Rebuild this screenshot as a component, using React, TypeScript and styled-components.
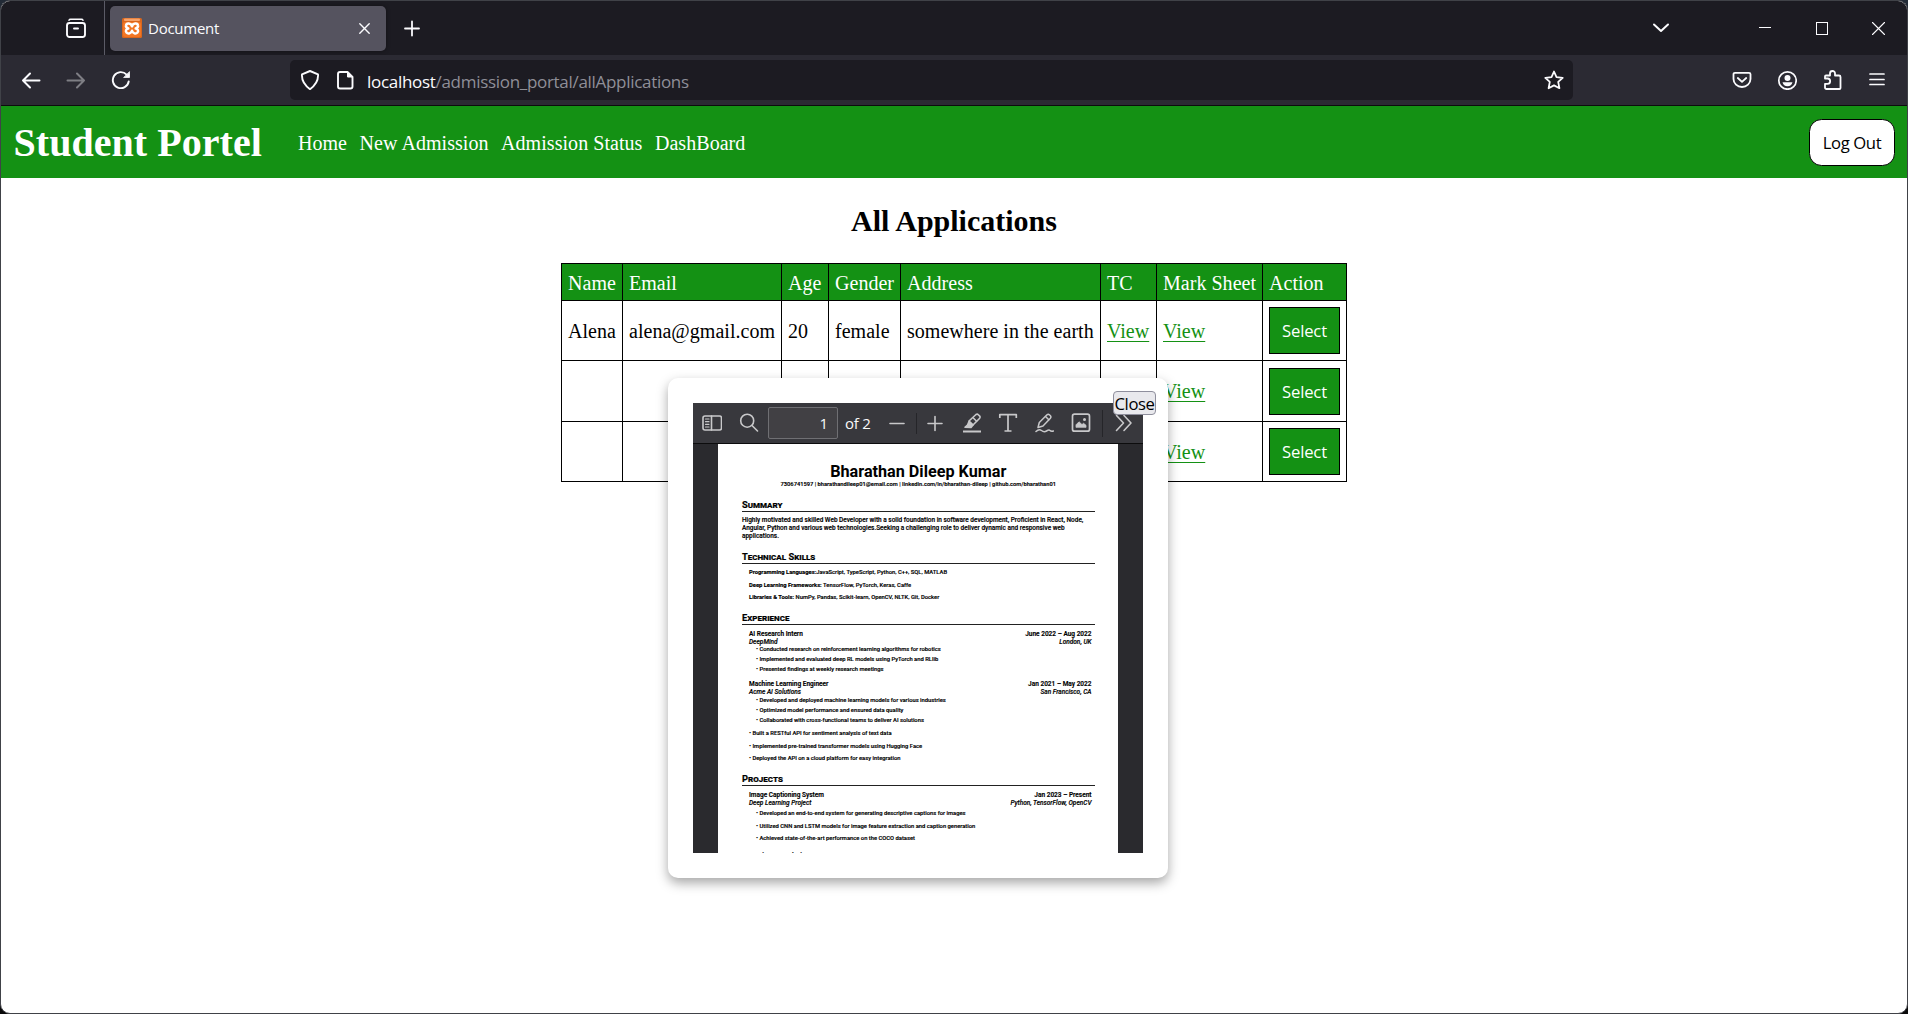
import React from "react";
import styled, { createGlobalStyle, css } from "styled-components";

const GREEN = "#149114";
const UI_FONT = `"Open Sans", "Noto Sans", sans-serif`;
const SERIF = `"Liberation Serif", "Times New Roman", serif`;

const GlobalStyle = createGlobalStyle`
  * { box-sizing: border-box; }
  body { margin: 0; background: linear-gradient(#222a36, #0a0a0a 1000px); }
`;

/* ---------- browser window ---------- */

const Window = styled.div`
  width: 1908px;
  height: 1014px;
  border: 1px solid #404248;
  border-radius: 10px;
  overflow: hidden;
  display: flex;
  flex-direction: column;
  background: #fff;
  font-family: ${UI_FONT};
`;

const TabStrip = styled.div`
  height: 54px;
  flex: none;
  display: flex;
  align-items: center;
  background: #1c1b22;
  color: #fbfbfe;
`;

const FirefoxView = styled.div`
  width: 104px;
  height: 54px;
  padding-left: 65px;
  display: flex;
  align-items: center;
  border-right: 1px solid #5b5b66;
`;

const Tab = styled.div`
  width: 276px;
  height: 45px;
  margin: 0 8px 0 5px;
  padding: 0 16px 0 12px;
  display: flex;
  align-items: center;
  gap: 6px;
  border-radius: 5px;
  background: #55535f;
  box-shadow: 0 0 4px rgba(0, 0, 0, 0.4);
`;

const TabTitle = styled.span`
  flex: 1;
  font-size: 15px;
  letter-spacing: -0.25px;
  line-height: 20px;
`;

const Slot = styled.div<{ $w: number; $dim?: boolean }>`
  width: ${(p) => p.$w}px;
  flex: none;
  display: flex;
  align-items: center;
  justify-content: center;
  opacity: ${(p) => (p.$dim ? 0.4 : 1)};
`;

const Spacer = styled.div`
  flex: 1;
`;

const Toolbar = styled.div`
  height: 51px;
  flex: none;
  display: flex;
  align-items: center;
  padding: 0 8px;
  background: #2b2a33;
  border-bottom: 1px solid #0c0c0d;
  color: #fbfbfe;
`;

const ButtonGroup = styled.div`
  display: flex;
  gap: 1px;
`;

const UrlBar = styled.div`
  width: 1283px;
  height: 40px;
  margin-left: 147px;
  padding: 0 9px 0 10px;
  display: flex;
  align-items: center;
  border-radius: 5px;
  background: #1c1b22;
`;

const UrlIcons = styled.div`
  display: flex;
  gap: 15px;
  margin-right: 12px;
`;

const Url = styled.span`
  flex: 1;
  padding-top: 3px;
  font-size: 17px;
  line-height: 24px;
  letter-spacing: -0.3px;
  color: #8f8f98;
`;

const UrlHost = styled.span`
  color: #fbfbfe;
`;

/* ---------- page ---------- */

const Page = styled.main`
  flex: 1;
  position: relative;
  font-family: ${SERIF};
  font-size: 20px;
  color: #000;
`;

const NavBar = styled.nav`
  height: 72px;
  padding: 0 12px 0 12.5px;
  display: flex;
  align-items: center;
  background: ${GREEN};
  color: #fff;
`;

const Brand = styled.h1`
  margin: 0 36px 0 0;
  padding-top: 2px;
  font-size: 40px;
  line-height: 46px;
  letter-spacing: 0.05px;
`;

const NavLinks = styled.div`
  flex: 1;
  display: flex;
  gap: 12.5px;
`;

const NavLink = styled.a`
  padding-top: 2px;
  line-height: 23px;
  letter-spacing: 0.05px;
  color: #fff;
`;

const PageButton = styled.button`
  padding: 0;
  font-family: ${UI_FONT};
  font-size: 16.67px;
  letter-spacing: -0.4px;
  border: 1px solid #000;
`;

const LogOut = styled(PageButton)`
  width: 86px;
  height: 47px;
  border-radius: 12.5px;
  background: #fff;
  color: #000;
`;

const Heading = styled.h2`
  margin: 25px 0 24px;
  font-size: 30px;
  line-height: 36px;
  text-align: center;
`;

const Table = styled.table`
  width: 786px;
  margin: 0 auto;
  table-layout: fixed;
  border-collapse: collapse;
`;

const cell = css`
  padding: 2px 0 0 6px;
  border: 1px solid #000;
  text-align: left;
  font-weight: 400;
  letter-spacing: 0.03px;
  white-space: nowrap;
`;

const Th = styled.th`
  ${cell}
  height: 37px;
  background: ${GREEN};
  color: #fff;
`;

const Td = styled.td<{ $h: number; $flush?: boolean }>`
  ${cell}
  height: ${(p) => p.$h}px;
  padding-top: ${(p) => (p.$flush ? 0 : 1)}px;
`;

const ViewLink = styled.a`
  color: ${GREEN};
  text-decoration: underline;
  text-decoration-thickness: 1px;
  text-underline-offset: 3px;
`;

const Select = styled(PageButton)`
  display: block;
  width: 71px;
  height: 47px;
  letter-spacing: -0.2px;
  background: ${GREEN};
  color: #fff;
`;

/* ---------- document preview ---------- */

const Modal = styled.div`
  position: absolute;
  left: 667px;
  top: 272px;
  width: 500px;
  height: 500px;
  padding: 25px;
  border-radius: 10px;
  background: #fff;
  box-shadow: 0 5px 12px rgba(0, 0, 0, 0.35);
`;

const Close = styled(PageButton)`
  position: absolute;
  top: 13px;
  right: 12px;
  width: 43px;
  height: 24px;
  line-height: 23px;
  border: 1px solid #8f8f9d;
  border-radius: 4px;
  background: #e9e9ed;
  color: #000;
`;

const Viewer = styled.div`
  width: 450px;
  height: 450px;
  overflow: hidden;
  background: #2a2a2e;
`;

const ViewerBar = styled.div`
  height: 41px;
  display: flex;
  align-items: center;
  background: #38383d;
  border-bottom: 1px solid #0c0c0d;
  color: #c8c8ca;
  font-family: ${UI_FONT};
  font-size: 15px;
`;

const PageInput = styled.div`
  flex: none;
  width: 70px;
  height: 32px;
  margin-left: 1px;
  padding-right: 9px;
  line-height: 31px;
  text-align: right;
  color: #f9f9fa;
  background: #414044;
  border: 1px solid #6f6f73;
  border-radius: 2px;
`;

const PageCount = styled.span`
  flex: none;
  width: 40px;
  padding-left: 7px;
  letter-spacing: -0.2px;
  color: #f9f9fa;
  white-space: nowrap;
`;

const Divider = styled.div<{ $h: number; $ml?: number }>`
  flex: none;
  width: 1px;
  height: ${(p) => p.$h}px;
  margin-left: ${(p) => p.$ml ?? 0}px;
  background: #252529;
`;

const Sheet = styled.article`
  width: 400px;
  height: 500px;
  margin: 0 auto;
  padding: 18px 23.5px 0 24px;
  background: #fff;
  font-family: Roboto, sans-serif;
  font-size: 6.5px;
  font-weight: 500;
  color: #000;
`;

const Name = styled.div`
  line-height: 20px;
  font-size: 16.2px;
  font-weight: 700;
  text-align: center;
  white-space: nowrap;
`;

const Contact = styled.div`
  line-height: 5px;
  font-size: 5.74px;
  font-weight: 600;
  text-align: center;
  white-space: nowrap;
  -webkit-text-stroke: 0.1px #000;
`;

const SectionTitle = styled.div<{ $mt: number }>`
  margin-top: ${(p) => p.$mt}px;
  padding-bottom: 1px;
  line-height: 10px;
  font-size: 9.3px;
  font-weight: 700;
  font-variant: small-caps;
  border-bottom: 1px solid #222;
  -webkit-text-stroke: 0.2px #000;
`;

const Lines = styled.div<{ $mt: number; $lh: number; $indent?: number; $size?: number }>`
  margin-top: ${(p) => p.$mt}px;
  padding-left: ${(p) => p.$indent ?? 0}px;
  line-height: ${(p) => p.$lh}px;
  font-size: ${(p) => p.$size ?? 6.5}px;
`;

const Line = styled.div<{ $b?: boolean; $i?: boolean }>`
  display: flex;
  justify-content: space-between;
  padding-right: 3px;
  white-space: pre;
  font-weight: ${(p) => (p.$b ? 600 : 500)};
  font-style: ${(p) => (p.$i ? "italic" : "normal")};
  -webkit-text-stroke: 0.15px #000;
`;

/* ---------- icons ---------- */

type IconProps = { s?: number; sw?: number; children: React.ReactNode };
const Icon = ({ s = 20, sw = 1.7, children }: IconProps) => (
  <svg width={s} height={s} viewBox={`0 0 ${s} ${s}`} fill="none" stroke="currentColor" strokeWidth={sw} strokeLinecap="round" strokeLinejoin="round">
    {children}
  </svg>
);

const ViewIcon = () => (
  <Icon sw={1.9}>
    <path d="M3 2.200Q3.400 1.200 4.500 1.200h11Q16.600 1.200 17 2.200" strokeWidth={1.500} />
    <rect x="1" y="5" width="18" height="14" rx="2.500" />
    <path d="M8 10.500h4" />
  </Icon>
);

const Favicon = () => (
  <svg width="20" height="20" viewBox="0 0 20 20">
    <rect width="20" height="20" rx="1.500" fill="#d9661c" />
    <rect x="1" y="4" width="18" height="15" rx="2" fill="#f37623" />
    <rect x="2" y="0.600" width="16" height="2.500" rx="1" fill="#f7a268" />
    <path d="M10 8.300C9 5 4.500 4.500 4 7.500C3.700 9 5 10 6.300 10.500C4 11 3.300 13 4.500 14.500C6 16.300 9.300 15.500 10 12.800C10.700 15.500 14 16.300 15.500 14.500C16.700 13 16 11 13.700 10.500C15 10 16.300 9 16 7.500C15.500 4.500 11 5 10 8.300Z" fill="none" stroke="#fff" strokeWidth="2.500" strokeLinejoin="round" />
  </svg>
);

const Back = () => <Icon sw={2}><path d="M2 10.500h16.500M9 3.500l-7 7 7 7" /></Icon>;
const Forward = () => <Icon sw={2}><path d="M1.500 10.500H18M11 3.500l7 7-7 7" /></Icon>;
const Reload = () => (
  <Icon sw={1.900}>
    <path d="M17.700 11.500A8 8 0 1 1 15.600 4.600" />
    <path d="M18.500 2v5.500h-5.500z" fill="currentColor" strokeWidth={0.800} />
  </Icon>
);
const Shield = () => <Icon sw={1.900}><path d="M10 1L18 4.300Q18.700 13 10 19.200Q1.300 13 2 4.300Z" /></Icon>;
const Doc = () => (
  <Icon sw={1.900}>
    <path d="M5 2h7.500l5 5v9.500q0 2-2 2H5q-2 0-2-2V4q0-2 2-2z" />
    <path d="M12.500 2v5h5z" fill="currentColor" strokeWidth={1} />
  </Icon>
);
const Star = () => (
  <Icon sw={1.800}>
    <path d="M10 1.500l2.500 5.600 6.200.7-4.500 4.100 1.200 6.300L10 15.400l-5.400 2.800 1.200-6.300L1.300 7.800l6.200-.7z" />
  </Icon>
);
const Pocket = () => (
  <Icon sw={1.800}>
    <path d="M3 2.800h14q1.500 0 1.500 1.500V9a8.500 8 0 0 1-17 0V4.300q0-1.500 1.500-1.500z" />
    <path d="M5.800 8l4.200 3.800L14.200 8" />
  </Icon>
);
const Account = () => (
  <Icon sw={1.700}>
    <circle cx="10.500" cy="10.500" r="8.700" />
    <circle cx="10.500" cy="7.900" r="3" fill="currentColor" stroke="none" />
    <path d="M5.500 12.200h10q-1 4-5 4t-5-4z" fill="currentColor" stroke="none" />
  </Icon>
);
const Puzzle = () => (
  <Icon sw={1.800}>
    <path d="M3 8.500V6.500q0-1 1-1H8V3.500a2.500 2.500 0 0 1 5 0V5.500h4q1.500 0 1.500 1.500V18q0 1-1 1H4.500q-1.500 0-1.500-1.500v-3.700H5.500a2.600 2.600 0 0 0 0-5.300H3z" />
  </Icon>
);
const Menu = () => <Icon sw={1.700}><path d="M3 4h14M3 9.500h14M3 14.500h14" /></Icon>;
const Chevron = () => <Icon sw={2}><path d="M3 6.500l7 6.500L17 6.500" /></Icon>;
const Plus = ({ sw = 2 }) => <Icon sw={sw}><path d="M3 10.500h14M10 3.500v14" /></Icon>;

const SidebarIcon = () => (
  <Icon sw={1.600}>
    <rect x="1" y="3" width="18.500" height="14" rx="2" />
    <path d="M9.500 3v14" />
    <path d="M3.500 6h3.500M3.500 8.700h3.500M3.500 11.300h3.500M3.500 14h3.500" strokeWidth={1.200} />
  </Icon>
);
const SearchIcon = () => <Icon sw={1.600}><circle cx="8.200" cy="7.700" r="6.500" /><path d="M13 12.500l5.500 5.500" /></Icon>;
const Minus = () => <Icon sw={1.600}><path d="M3 10.500h14" /></Icon>;
const Highlight = () => (
  <Icon sw={1.600}>
    <path d="M1 18.500h18" strokeWidth={2} strokeLinecap="butt" />
    <path d="M7 8L14 1.500q1.300-.8 2.300.2l1.200 1.200q1 1 .2 2.300L11 12z" />
    <path d="M7 8.500L11 12l-2 2.500-6-.2 2.500-2.300z" fill="currentColor" />
    <path d="M11.300 5l3.300 3.300" />
  </Icon>
);
const TextIcon = () => (
  <Icon sw={1.700}>
    <path d="M1.800 5V1.600h16.500V5M10 1.600v16.500M6.500 18h7" strokeLinecap="butt" />
  </Icon>
);
const Draw = () => (
  <Icon sw={1.500}>
    <path d="M4 14.500l1.300-5L13 1.800q1.200-1 2.400 0l1 1q1 1.200 0 2.400L9 13z" />
    <path d="M11.500 3.500l3.300 3.300" />
    <path d="M2 18.500q3-3 5.500-1t5 .5t3.500-.5t3.500 .5" strokeWidth={1.500} />
  </Icon>
);
const ImageIcon = () => (
  <Icon sw={1.700}>
    <rect x="1.500" y="1.200" width="17" height="17" rx="2" />
    <path d="M5 14v-2.200l3-3 3 2.800 1.500-1.300 2.500 2v1.700z" fill="currentColor" strokeWidth={0.800} />
    <circle cx="13.500" cy="6.500" r="1.500" fill="currentColor" stroke="none" />
  </Icon>
);
const More = () => <Icon sw={1.600}><path d="M2.500 2.500l7 7.500-7 7.500M10 2.500l7 7.500-7 7.500" /></Icon>;

/* ---------- data ---------- */

const COLUMNS: [string, number][] = [
  ["Name", 61], ["Email", 159], ["Age", 47], ["Gender", 72],
  ["Address", 200], ["TC", 56], ["Mark Sheet", 106], ["Action", 84],
];

const ROWS = [
  { h: 60, cells: ["Alena", "alena@gmail.com", "20", "female", "somewhere in the earth"] },
  { h: 61, cells: ["", "", "", "", ""] },
  { h: 60, cells: ["", "", "", "", ""] },
];

const Entry = ({ a, b, i }: { a: string; b: string; i?: boolean }) => (
  <Line $b={!i} $i={i}><span>{a}</span><span>{b}</span></Line>
);

const Bullets = ({ items, mt, lh, indent }: { items: string[]; mt: number; lh: number; indent: number }) => (
  <Lines $mt={mt} $lh={lh} $indent={indent} $size={5.8}>
    {items.map((t) => (
      <Line key={t}><span>{"• " + t}</span></Line>
    ))}
  </Lines>
);

const Resume = () => (
  <Sheet>
    <Name>Bharathan Dileep Kumar</Name>
    <Contact>7306741597 | bharathandileep01@email.com | linkedin.com/in/bharathan-dileep | github.com/bharathan01</Contact>

    <SectionTitle $mt={12.5}>Summary</SectionTitle>
    <Lines $mt={4.8} $lh={8} $size={6.44}>
      <Line>Highly motivated and skilled Web Developer with a solid foundation in software development, Proficient in React, Node,</Line>
      <Line>Angular, Python and various web technologies.Seeking a challenging role to deliver dynamic and responsive web</Line>
      <Line>applications.</Line>
    </Lines>

    <SectionTitle $mt={11.7}>Technical Skills</SectionTitle>
    <Lines $mt={2.3} $lh={12.35} $indent={7} $size={5.8}>
      <Line><span><b>Programming Languages:</b>JavaScript, TypeScript, Python, C++, SQL, MATLAB</span></Line>
      <Line><span><b>Deep Learning Frameworks:</b> TensorFlow, PyTorch, Keras, Caffe</span></Line>
      <Line><span><b>Libraries &amp; Tools:</b> NumPy, Pandas, Scikit-learn, OpenCV, NLTK, Git, Docker</span></Line>
    </Lines>

    <SectionTitle $mt={9.65}>Experience</SectionTitle>
    <Lines $mt={5} $lh={8} $indent={7}>
      <Entry a="AI Research Intern" b="June 2022 – Aug 2022" />
      <Entry a="DeepMind" b="London, UK" i />
    </Lines>
    <Bullets mt={-0.5} lh={9.8} indent={14} items={[
      "Conducted research on reinforcement learning algorithms for robotics",
      "Implemented and evaluated deep RL models using PyTorch and RLlib",
      "Presented findings at weekly research meetings",
    ]} />
    <Lines $mt={5.3} $lh={8} $indent={7}>
      <Entry a="Machine Learning Engineer" b="Jan 2021 – May 2022" />
      <Entry a="Acme AI Solutions" b="San Francisco, CA" i />
    </Lines>
    <Bullets mt={-0.1} lh={9.8} indent={14} items={[
      "Developed and deployed machine learning models for various industries",
      "Optimized model performance and ensured data quality",
      "Collaborated with cross-functional teams to deliver AI solutions",
    ]} />
    <Bullets mt={1.9} lh={12.35} indent={7} items={[
      "Built a RESTful API for sentiment analysis of text data",
      "Implemented pre-trained transformer models using Hugging Face",
      "Deployed the API on a cloud platform for easy integration",
    ]} />

    <SectionTitle $mt={9.6}>Projects</SectionTitle>
    <Lines $mt={4.8} $lh={8} $indent={7}>
      <Entry a="Image Captioning System" b="Jan 2023 – Present" />
      <Entry a="Deep Learning Project" b="Python, TensorFlow, OpenCV" i />
    </Lines>
    <Bullets mt={0.6} lh={12.35} indent={14} items={[
      "Developed an end-to-end system for generating descriptive captions for images",
      "Utilized CNN and LSTM models for image feature extraction and caption generation",
      "Achieved state-of-the-art performance on the COCO dataset",
    ]} />
    <Lines $mt={7.8} $lh={8} $indent={7}>
      <Entry a="Sentiment Analysis API" b="Jun 2022 – Dec 2022" />
    </Lines>
  </Sheet>
);

export default function App() {
  return (
    <>
      <GlobalStyle />
      <Window>
        <TabStrip>
          <FirefoxView><ViewIcon /></FirefoxView>
          <Tab>
            <Favicon />
            <TabTitle>Document</TabTitle>
            <Icon s={11} sw={1.400}><path d="M.8.8l9.400 9.400M10.200.8L.8 10.200" /></Icon>
          </Tab>
          <Slot $w={36}><Plus sw={1.800} /></Slot>
          <Spacer />
          <Slot $w={44}><Chevron /></Slot>
          <Slot $w={53} />
          <Slot $w={57}><Icon s={13} sw={1}><path d="M1 5.500h12" strokeLinecap="butt" /></Icon></Slot>
          <Slot $w={57}><Icon s={13} sw={1}><rect x="1.500" y=".5" width="11" height="12" strokeLinejoin="miter" /></Icon></Slot>
          <Slot $w={57}><Icon s={13} sw={1.100}><path d="M.5.5l12 12M12.500.5l-12 12" /></Icon></Slot>
        </TabStrip>
        <Toolbar>
          <ButtonGroup>
            <Slot $w={44}><Back /></Slot>
            <Slot $w={44} $dim><Forward /></Slot>
            <Slot $w={44}><Reload /></Slot>
          </ButtonGroup>
          <UrlBar>
            <UrlIcons><Shield /><Doc /></UrlIcons>
            <Url><UrlHost>localhost</UrlHost>/admission_portal/allApplications</Url>
            <Star />
          </UrlBar>
          <Spacer />
          <ButtonGroup>
            <Slot $w={44}><Pocket /></Slot>
            <Slot $w={44}><Account /></Slot>
            <Slot $w={44}><Puzzle /></Slot>
            <Slot $w={44}><Menu /></Slot>
          </ButtonGroup>
        </Toolbar>
        <Page>
          <NavBar>
            <Brand>Student Portel</Brand>
            <NavLinks>
              {["Home", "New Admission", "Admission Status", "DashBoard"].map((t) => (
                <NavLink key={t}>{t}</NavLink>
              ))}
            </NavLinks>
            <LogOut>Log Out</LogOut>
          </NavBar>
          <Heading>All Applications</Heading>
          <Table>
            <colgroup>
              {COLUMNS.map(([n, w]) => <col key={n} style={{ width: w }} />)}
            </colgroup>
            <thead>
              <tr>{COLUMNS.map(([n]) => <Th key={n}>{n}</Th>)}</tr>
            </thead>
            <tbody>
              {ROWS.map((r, i) => (
                <tr key={i}>
                  {r.cells.map((c, j) => <Td key={j} $h={r.h}>{c}</Td>)}
                  <Td $h={r.h}><ViewLink>View</ViewLink></Td>
                  <Td $h={r.h}><ViewLink>View</ViewLink></Td>
                  <Td $h={r.h} $flush><Select>Select</Select></Td>
                </tr>
              ))}
            </tbody>
          </Table>
          <Modal>
            <Viewer>
              <ViewerBar>
                <Slot $w={38}><SidebarIcon /></Slot>
                <Slot $w={36}><SearchIcon /></Slot>
                <PageInput>1</PageInput>
                <PageCount>of 2</PageCount>
                <Slot $w={38}><Minus /></Slot>
                <Divider $h={21} />
                <Slot $w={36}><Plus sw={1.600} /></Slot>
                <Slot $w={38}><Highlight /></Slot>
                <Slot $w={34}><TextIcon /></Slot>
                <Slot $w={38}><Draw /></Slot>
                <Slot $w={36}><ImageIcon /></Slot>
                <Divider $h={27} $ml={3} />
                <Slot $w={42}><More /></Slot>
              </ViewerBar>
              <Resume />
            </Viewer>
            <Close>Close</Close>
          </Modal>
        </Page>
      </Window>
    </>
  );
}
